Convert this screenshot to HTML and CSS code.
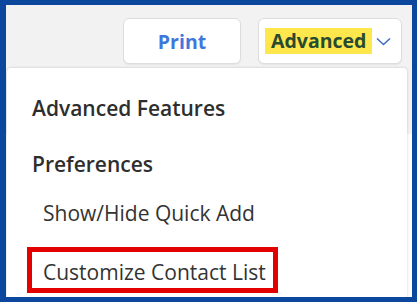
FILE: index.html
```html
<!DOCTYPE html>
<html lang="en">
<head>
    <meta charset="UTF-8">
    <title>Advanced</title>
    <link rel="stylesheet" href="styles.css">
</head>
<body>
    <div class="frame">
        <!-- toolbar -->
        <div class="toolbar">
            <button class="btn btn-print" type="button">Print</button>
            <button class="btn btn-advanced" type="button">
                <span class="mark-yellow">Advanced</span>
                <svg class="chevron" width="15" height="9" viewBox="0 0 15 9">
                    <path d="M1 1.5 L7.5 7.5 L14 1.5" fill="none" stroke="#3f6fc6" stroke-width="1.6"/>
                </svg>
            </button>
        </div>

        <!-- dropdown menu -->
        <div class="menu">
            <div class="menu-title first">Advanced Features</div>
            <div class="menu-title">Preferences</div>
            <div class="menu-item">Show/Hide Quick Add</div>
            <div class="menu-item marked">Customize Contact List</div>
        </div>
    </div>
</body>
</html>
```

FILE: styles.css
```css
body{
    margin: 0;
    font-family: "Open Sans", "Liberation Sans", sans-serif;
}

.frame{
    position: relative;
    width: 417px;
    height: 302px;
    box-sizing: border-box;
    border: 5px solid #0b479d;
    border-left-width: 6px;
    overflow: hidden;
    background: linear-gradient(#f2f2f2 0, #f2f2f2 129px, #ffffff 129px);
}

.toolbar{
    display: flex;
    justify-content: flex-end;
    gap: 17px;
    padding: 13px 10px 0 0;
}

.btn{
    height: 46px;
    box-sizing: border-box;
    border: 1px solid #dddddd;
    border-radius: 6px;
    background: #ffffff;
    box-shadow: 0 1px 1px rgba(0,0,0,0.06);
    font-family: inherit;
    font-size: 19.5px;
    font-weight: 700;
    padding: 0;
}

.btn-print{
    width: 118px;
    color: #3f78dc;
}

.btn-advanced{
    width: 144px;
    display: flex;
    align-items: center;
    padding-left: 6px;
}

.mark-yellow{
    background: #fde74c;
    color: #284a30;
    padding: 0 6px;
    height: 26px;
    line-height: 26px;
}

.chevron{
    margin-left: 4px;
}

.menu{
    position: absolute;
    left: 1px;
    right: 5px;
    top: 63px;
    bottom: -10px;
    background: #ffffff;
    border-radius: 4px;
    box-shadow: 0 0 3px rgba(0,0,0,0.18);
    padding: 26px 0 0 25px;
}

.menu-title{
    font-size: 21px;
    font-weight: 600;
    line-height: 28px;
    color: #2e2e2e;
    margin-top: 28px;
}

.menu-title.first{
    margin-top: 0;
}

.menu-item{
    font-size: 21px;
    line-height: 28px;
    color: #333333;
    margin-top: 21px;
    padding-left: 11px;
}

.menu-item.marked{
    display: inline-block;
    margin: 20px 0 0 -5px;
    border: 5px solid #e20000;
    padding: 6px 7px 2px 11px;
}
```
